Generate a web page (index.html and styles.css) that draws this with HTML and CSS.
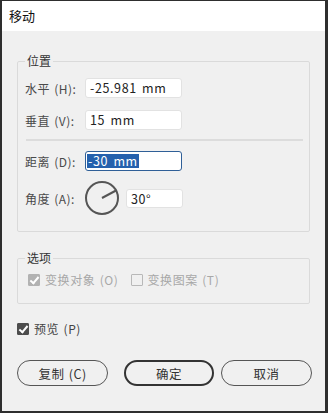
FILE: index.html
```html
<!DOCTYPE html>
<html lang="zh-CN">
<head>
  <meta charset="UTF-8" />
  <title>移动</title>
  <link rel="stylesheet" href="styles.css">
</head>
<body>
  <div class="window">
    <div class="titlebar">移动</div>
    <div class="content">
      <fieldset class="group group-pos">
        <legend>位置</legend>
        <div class="row">
          <span class="label">水平 (H):</span>
          <span class="field">-25.981 mm</span>
        </div>
        <div class="row">
          <span class="label">垂直 (V):</span>
          <span class="field">15 mm</span>
        </div>
        <div class="sep"></div>
        <div class="row">
          <span class="label">距离 (D):</span>
          <span class="field focused"><span class="sel">-30 mm</span></span>
        </div>
        <div class="row row-angle">
          <span class="label">角度 (A):</span>
          <svg class="dial" width="36" height="36" viewBox="0 0 36 36">
            <circle cx="18" cy="18" r="16" fill="none" stroke="#555" stroke-width="2"/>
            <line x1="18" y1="18" x2="32" y2="10.5" stroke="#555" stroke-width="2"/>
          </svg>
          <span class="field small">30°</span>
        </div>
      </fieldset>

      <fieldset class="group group-opt">
        <legend>选项</legend>
        <div class="checks">
          <span class="check disabled"><span class="box on"></span>变换对象 (O)</span>
          <span class="check disabled"><span class="box"></span>变换图案 (T)</span>
        </div>
      </fieldset>

      <div class="check preview"><span class="box on"></span>预览 (P)</div>

      <div class="buttons">
        <button>复制 (C)</button>
        <button class="primary">确定</button>
        <button>取消</button>
      </div>
    </div>
  </div>
</body>
</html>
```

FILE: styles.css
```css
body {
  margin: 0;
  font-family: "Noto Sans CJK SC", "Noto Sans", sans-serif;
  color: #333;
  background: #2b2b2b;
}
.window {
  width: 328px;
  height: 413px;
  box-sizing: border-box;
  border-left: 2px solid #2e2e2e;
  border-top: 1px solid #2e2e2e;
  border-right: 3px solid #2e2e2e;
  border-bottom: 2px solid #2e2e2e;
  background: #f0f0f0;
}
.titlebar {
  height: 30px;
  line-height: 30px;
  padding-left: 7px;
  background: #fff;
  font-size: 13px;
  color: #111;
}
.content {
  padding: 23px 0 0 15px;
}
.group {
  width: 293px;
  box-sizing: border-box;
  margin: 0;
  border: 1px solid #dadada;
  border-radius: 2px;
  padding: 0 0 0 7px;
}
.group legend {
  padding: 0 2px;
  margin-left: 0;
  font-size: 12px;
  line-height: 14px;
  color: #333;
}
.row {
  display: flex;
  align-items: center;
  height: 20px;
  font-size: 12px;
}
.group-pos .row:first-of-type {
  margin-top: 10px;
}
.row + .row {
  margin-top: 12px;
}
.label {
  width: 60px;
  flex: none;
  white-space: nowrap;
  color: #4a4a4a;
  letter-spacing: 0.5px;
  word-spacing: 1px;
}
.field {
  width: 97px;
  height: 20px;
  box-sizing: border-box;
  background: #fff;
  border: 1px solid #e2e2e2;
  border-radius: 3px;
  font-size: 12.5px;
  line-height: 18px;
  padding-left: 4px;
  color: #222;
  letter-spacing: 0.6px;
  word-spacing: 2px;
  white-space: nowrap;
}
.field.focused {
  border-color: #2f5f97;
  padding-left: 1px;
}
.sel {
  display: inline-block;
  background: #2561ad;
  color: #fff;
  line-height: 14px;
  padding: 0 1px;
}
.sep {
  height: 2px;
  background: #dcdcdc;
  width: 277px;
  margin: 9px 0 10px 1px;
}
.row-angle {
  height: 36px;
  margin-top: 9px !important;
  margin-bottom: 15px;
}
.dial {
  flex: none;
  margin-left: -1px;
  margin-right: 6px;
}
.field.small {
  width: 57px;
  height: 19px;
  padding-left: 4px;
}
.group-opt {
  margin-top: 19px;
  height: 53px;
}
.checks {
  display: flex;
  gap: 12px;
  margin-top: 6px;
}
.check {
  display: flex;
  align-items: center;
  font-size: 12px;
  color: #444;
  white-space: nowrap;
  letter-spacing: 0.6px;
  word-spacing: 1px;
}
.check.disabled {
  color: #a8a8a8;
}
.box {
  width: 12px;
  height: 12px;
  box-sizing: border-box;
  border: 1px solid #b8b8b8;
  border-radius: 1px;
  margin-right: 5px;
  position: relative;
  flex: none;
}
.check.disabled:first-child .box {
  margin-left: 3px;
}
.box.on {
  background: #b2b2b2;
  border-color: #b2b2b2;
}
.box.on::after {
  content: "";
  position: absolute;
  left: 3px;
  top: 0px;
  width: 3px;
  height: 7px;
  border: solid #fff;
  border-width: 0 2px 2px 0;
  transform: rotate(40deg);
}
.preview {
  margin-top: 16px;
  font-size: 12px;
}
.preview .box.on {
  background: #4d4d4d;
  border-color: #4d4d4d;
}
.buttons {
  display: flex;
  margin-top: 23px;
}
button {
  height: 26px;
  width: 91px;
  border: 1.5px solid #555;
  border-radius: 13px;
  background: #f0f0f0;
  font-family: "Noto Sans CJK SC", "Noto Sans", sans-serif;
  font-size: 12.5px;
  color: #333;
  padding: 0;
  letter-spacing: 0.5px;
  word-spacing: 1px;
}
button.primary {
  border: 2px solid #333;
  margin-left: 16px;
  margin-right: 7px;
  width: 90px;
}
```
